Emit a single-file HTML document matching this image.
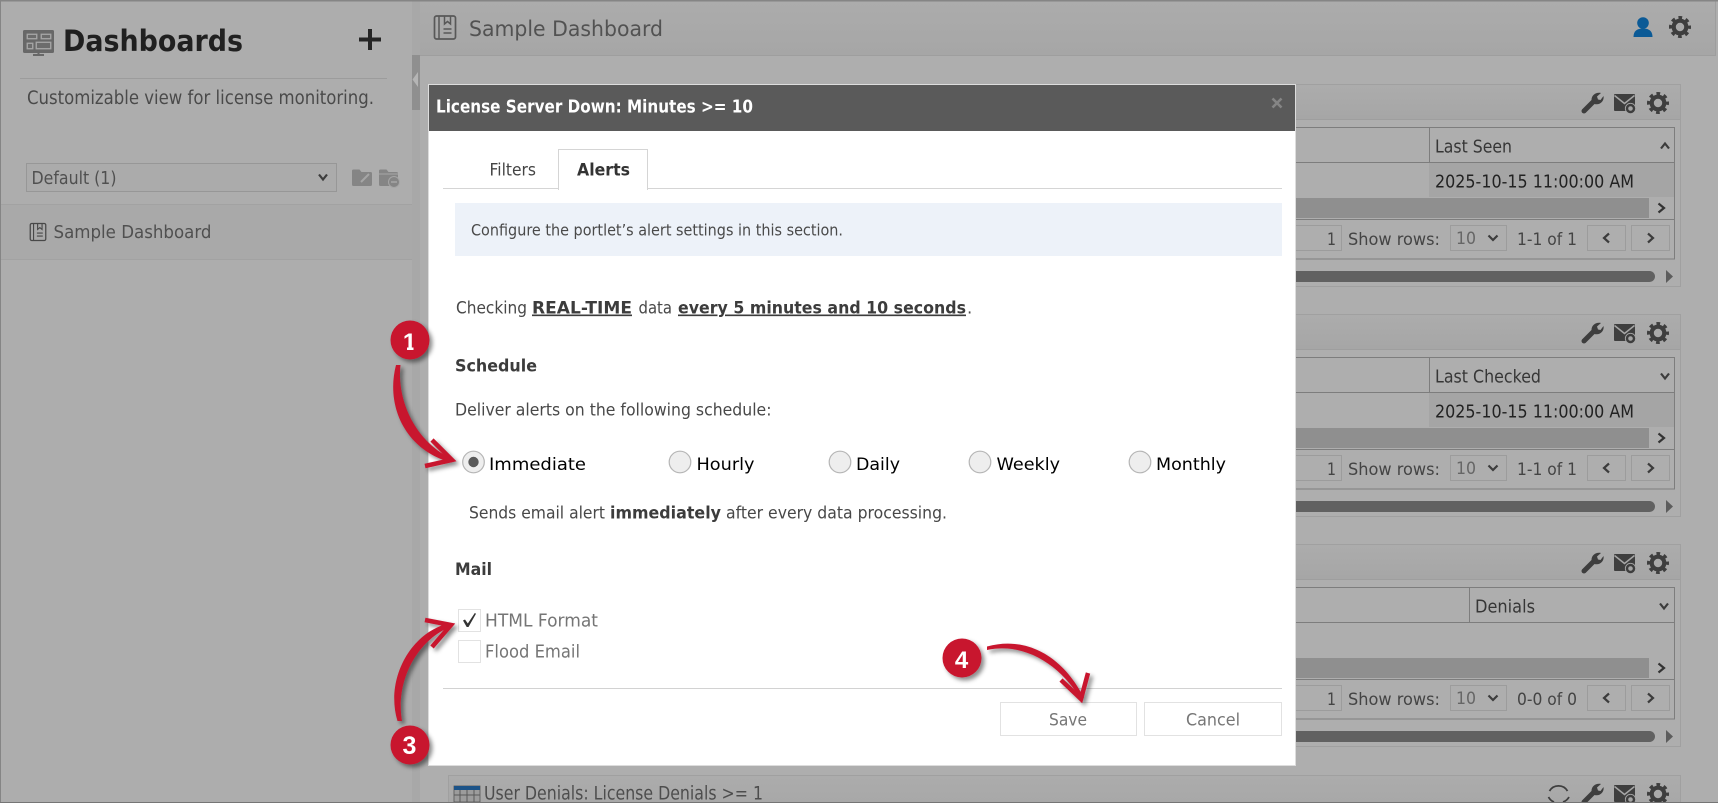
<!DOCTYPE html>
<html><head><meta charset="utf-8"><title>Sample Dashboard</title>
<style>
html,body{margin:0;padding:0;background:#aeaeae;overflow:hidden}
svg{display:block}
text{font-family:"DejaVu Sans","Liberation Sans",sans-serif;white-space:pre}
.p{font-size:17.5px;fill:#3a3a3a}
.g{font-size:17px;fill:#444}
.m{font-size:16.5px;fill:#484848}
.b{font-weight:bold}
.r{font-size:17px;fill:#000}
.n{font-family:"Liberation Sans",sans-serif;font-weight:bold;font-size:24px;fill:#fff}
</style></head><body>
<svg xmlns="http://www.w3.org/2000/svg" width="1718" height="803" viewBox="0 0 1718 803">
<defs>
<filter id="sh" x="-30%" y="-30%" width="170%" height="170%"><feDropShadow dx="3" dy="3" stdDeviation="2.2" flood-color="#000" flood-opacity=".45"/></filter>
<linearGradient id="hd" x1="0" y1="0" x2="0" y2="1"><stop offset="0" stop-color="#acacac"/><stop offset="1" stop-color="#a6a6a6"/></linearGradient>
<symbol id="gear" viewBox="0 0 22 22" overflow="visible"><circle cx="11" cy="11" r="6.3" fill="none" stroke="#3e3e3e" stroke-width="4.2"/><circle cx="11" cy="11" r="9.3" fill="none" stroke="#3e3e3e" stroke-width="3.4" stroke-dasharray="3.65 3.65" stroke-dashoffset="1.8"/></symbol>
<symbol id="wrench" viewBox="0 0 22 22" overflow="visible"><path d="M3,19 L12,10" stroke="#3e3e3e" stroke-width="5" stroke-linecap="round" fill="none"/><path d="M10.500,8 C10.500,3 15,0 20,1 L16,4.500 L17,7.500 L19.500,8 L22.500,4 C23.500,9 19,13.500 13.500,12 Z" fill="#3e3e3e"/></symbol>
<symbol id="mail" viewBox="0 0 23 20" overflow="visible"><rect x="0" y="0" width="21" height="17" rx="1" fill="#3e3e3e"/><path d="M0.500,1.500 L10.500,9.500 L20.500,1.500" fill="none" stroke="#a6a6a6" stroke-width="1.500"/><circle cx="16.500" cy="14.500" r="5.600" fill="#a6a6a6"/><circle cx="16.500" cy="14.500" r="3.500" fill="none" stroke="#3e3e3e" stroke-width="2.400"/></symbol>
<symbol id="book" viewBox="0 0 23 25" overflow="visible"><rect x="1" y="1" width="21" height="23" rx="2" fill="none" stroke="currentColor" stroke-width="1.700"/><path d="M5.500,1 V24" stroke="currentColor" stroke-width="1.500"/><path d="M11,1 V9 L14,6.500 L17,9 V1" fill="none" stroke="currentColor" stroke-width="1.500"/><path d="M10,14 H18 M10,18 H18" stroke="currentColor" stroke-width="1.500"/></symbol>
</defs>

<!-- base -->
<rect width="1718" height="803" fill="#aeaeae"/>
<rect width="412" height="803" fill="#adadad"/>
<rect x="412" width="8" height="803" fill="#a8a8a8"/>
<rect x="412" y="55" width="8" height="55" fill="#8f8f8f"/>
<path d="M418,72 L412.500,79.500 L418,87 Z" fill="#b5b5b5"/>
<rect x="420" width="1295" height="55" fill="url(#hd)"/>
<rect x="420" y="55" width="1295" height="1" fill="#9e9e9e"/>
<rect x="1715" width="1" height="56" fill="#9e9e9e"/>
<rect width="1718" height="1.500" fill="#858585"/>
<rect width="1" height="803" fill="#858585"/>
<rect y="802" width="1718" height="1" fill="#757575"/>

<!-- sidebar -->
<g>
<rect x="23" y="30" width="31" height="23" rx="1.500" fill="#686868"/>
<path d="M33,55 H44 M38.500,53 V56" stroke="#686868" stroke-width="2"/>
<path d="M27,34 H37 V39 H27 Z M41,34 H51 V39 H41 Z M27,43 H33 V49 H27 Z M36,42 H51 V49 H36 Z" fill="#9e9e9e" stroke="#a9a9a9" stroke-width=".8"/>
<path d="M28,35 H36 V38 H28 Z M42,35 H50 V38 H42 Z M28,44 H32 V48 H28 Z M37,43 H50 V48 H37 Z" fill="#6c6c6c"/>
</g>
<text x="63" y="51" font-size="29" font-weight="bold" fill="#202020" textLength="180" lengthAdjust="spacingAndGlyphs">Dashboards</text>
<path d="M359,39.500 H381 M370,29 V50" stroke="#252525" stroke-width="4"/>
<rect x="20" y="78" width="367" height="1" fill="#9c9c9c"/>
<text x="27" y="104" style="fill:#4a4a4a;font-size:18.500px" textLength="347" lengthAdjust="spacingAndGlyphs">Customizable view for license monitoring.</text>
<rect x="26.500" y="163.500" width="310" height="28" fill="#ababab" stroke="#979797"/>
<text x="31.500" y="184" style="font-size:17.500px;fill:#505050" textLength="85" lengthAdjust="spacingAndGlyphs">Default (1)</text>
<path d="M319,174.500 L323,179.500 L327,174.500" fill="none" stroke="#3c3c3c" stroke-width="2.200"/>
<path d="M352,171 a1.500,1.500 0 0 1 1.500,-1.500 h6 l2,2.500 h9 a1.500,1.500 0 0 1 1.500,1.500 v11 a1.500,1.500 0 0 1 -1.500,1.500 h-17 a1.500,1.500 0 0 1 -1.500,-1.500 Z" fill="#858585"/>
<path d="M361,182 L369,174" stroke="#a6a6a6" stroke-width="2"/>
<path d="M379,171 a1.500,1.500 0 0 1 1.500,-1.500 h6 l2,2.500 h8 a1.500,1.500 0 0 1 1.500,1.500 v11 a1.500,1.500 0 0 1 -1.500,1.500 h-16 a1.500,1.500 0 0 1 -1.500,-1.500 Z" fill="#858585"/>
<path d="M379,174 H398" stroke="#a6a6a6" stroke-width="1"/>
<circle cx="394" cy="182" r="5.500" fill="#858585" stroke="#a6a6a6"/><path d="M391,182 H397" stroke="#a6a6a6" stroke-width="1.500"/>
<rect x="1" y="204" width="411" height="55" fill="#a9a9a9"/>
<rect x="1" y="204" width="411" height="1" fill="#a2a2a2"/>
<rect x="1" y="259" width="411" height="1" fill="#a2a2a2"/>
<use href="#book" x="29.500" y="222" width="17" height="20" color="#484848"/>
<text x="53.500" y="238" style="font-size:18px;fill:#505050" textLength="158" lengthAdjust="spacingAndGlyphs">Sample Dashboard</text>

<!-- content header -->
<use href="#book" x="433.500" y="14" width="23" height="27" color="#585858"/>
<text x="469" y="36" style="font-size:21px;fill:#525252" textLength="194" lengthAdjust="spacingAndGlyphs">Sample Dashboard</text>
<circle cx="1643" cy="23" r="5.800" fill="#0b5a96"/>
<path d="M1633.500,37 C1633.500,31 1637,28.500 1643,28.500 C1649,28.500 1652.500,31 1652.500,37 Z" fill="#0b5a96"/>
<use href="#gear" x="1669" y="16" width="22" height="22"/>

<!-- portlet 1 -->
<rect x="448.500" y="84.500" width="1232" height="202" fill="#aeaeae" stroke="#a0a0a0"/>
<rect x="449" y="85" width="1231" height="34" fill="url(#hd)"/><rect x="449" y="119" width="1231" height="1" fill="#9e9e9e"/>
<use href="#wrench" x="1581" y="92" width="22" height="22"/><use href="#mail" x="1614" y="94" width="23" height="20"/><use href="#gear" x="1647" y="92" width="22" height="22"/>
<rect x="460" y="127.500" width="1214.500" height="131.500" fill="none" stroke="#7d7d7d"/>
<path d="M460,162.500 H1675 M1429.500,127 V162" stroke="#7d7d7d" fill="none"/>
<rect x="1429" y="163" width="245" height="34" fill="#a5a5a5"/>
<text x="1435" y="152.500" class="p" style="fill:#363636" textLength="77" lengthAdjust="spacingAndGlyphs">Last Seen</text>
<path d="M1661,148.500 L1665,143.500 L1669,148.500" fill="none" stroke="#3c3c3c" stroke-width="2.200"/>
<text x="1435" y="187.500" class="p" style="fill:#222" textLength="199" lengthAdjust="spacingAndGlyphs">2025-10-15 11:00:00 AM</text>
<rect x="461" y="198" width="1188" height="20" fill="#8f8f8f"/>
<path d="M1658.500,203.500 L1664,208 L1658.500,212.500" fill="none" stroke="#333" stroke-width="2.200"/>
<path d="M460,219.500 H1675" stroke="#7d7d7d"/>
<rect x="1290.500" y="225.500" width="51" height="25" fill="none" stroke="#9c9c9c"/>
<text x="1327" y="245" class="g" textLength="9" lengthAdjust="spacingAndGlyphs">1</text>
<text x="1348" y="245" class="g" textLength="92" lengthAdjust="spacingAndGlyphs">Show rows:</text>
<rect x="1450.500" y="225.500" width="56" height="25" fill="none" stroke="#9c9c9c"/>
<text x="1456" y="244" class="g" style="fill:#666" textLength="20" lengthAdjust="spacingAndGlyphs">10</text>
<path d="M1488.500,235.500 L1493,240 L1497.500,235.500" fill="none" stroke="#3c3c3c" stroke-width="2.200"/>
<text x="1517" y="245" class="g" textLength="60" lengthAdjust="spacingAndGlyphs">1-1 of 1</text>
<rect x="1587.500" y="225.500" width="38" height="25" fill="none" stroke="#9c9c9c"/><rect x="1631.500" y="225.500" width="38" height="25" fill="none" stroke="#9c9c9c"/>
<path d="M1609,233.500 L1604,238 L1609,242.500 M1648,233.500 L1653,238 L1648,242.500" fill="none" stroke="#3c3c3c" stroke-width="2.200"/>
<rect x="460" y="271" width="1195" height="11" rx="5.500" fill="#616161"/>
<path d="M1666,270 L1673,276.500 L1666,283 Z" fill="#5c5c5c"/>

<!-- portlet 2 -->
<rect x="448.500" y="314.500" width="1232" height="202" fill="#aeaeae" stroke="#a0a0a0"/>
<rect x="449" y="315" width="1231" height="34" fill="url(#hd)"/><rect x="449" y="349" width="1231" height="1" fill="#9e9e9e"/>
<use href="#wrench" x="1581" y="322" width="22" height="22"/><use href="#mail" x="1614" y="324" width="23" height="20"/><use href="#gear" x="1647" y="322" width="22" height="22"/>
<rect x="460" y="357.500" width="1214.500" height="131.500" fill="none" stroke="#7d7d7d"/>
<path d="M460,392.500 H1675 M1429.500,357 V392" stroke="#7d7d7d" fill="none"/>
<rect x="1429" y="393" width="245" height="34" fill="#a5a5a5"/>
<text x="1435" y="382.500" class="p" style="fill:#363636" textLength="106" lengthAdjust="spacingAndGlyphs">Last Checked</text>
<path d="M1661,373.500 L1665,378.500 L1669,373.500" fill="none" stroke="#3c3c3c" stroke-width="2.200"/>
<text x="1435" y="417.500" class="p" style="fill:#222" textLength="199" lengthAdjust="spacingAndGlyphs">2025-10-15 11:00:00 AM</text>
<rect x="461" y="428" width="1188" height="20" fill="#8f8f8f"/>
<path d="M1658.500,433.500 L1664,438 L1658.500,442.500" fill="none" stroke="#333" stroke-width="2.200"/>
<path d="M460,449.500 H1675" stroke="#7d7d7d"/>
<rect x="1290.500" y="455.500" width="51" height="25" fill="none" stroke="#9c9c9c"/>
<text x="1327" y="475" class="g" textLength="9" lengthAdjust="spacingAndGlyphs">1</text>
<text x="1348" y="475" class="g" textLength="92" lengthAdjust="spacingAndGlyphs">Show rows:</text>
<rect x="1450.500" y="455.500" width="56" height="25" fill="none" stroke="#9c9c9c"/>
<text x="1456" y="474" class="g" style="fill:#666" textLength="20" lengthAdjust="spacingAndGlyphs">10</text>
<path d="M1488.500,465.500 L1493,470 L1497.500,465.500" fill="none" stroke="#3c3c3c" stroke-width="2.200"/>
<text x="1517" y="475" class="g" textLength="60" lengthAdjust="spacingAndGlyphs">1-1 of 1</text>
<rect x="1587.500" y="455.500" width="38" height="25" fill="none" stroke="#9c9c9c"/><rect x="1631.500" y="455.500" width="38" height="25" fill="none" stroke="#9c9c9c"/>
<path d="M1609,463.500 L1604,468 L1609,472.500 M1648,463.500 L1653,468 L1648,472.500" fill="none" stroke="#3c3c3c" stroke-width="2.200"/>
<rect x="460" y="501" width="1195" height="11" rx="5.500" fill="#616161"/>
<path d="M1666,500 L1673,506.500 L1666,513 Z" fill="#5c5c5c"/>

<!-- portlet 3 -->
<rect x="448.500" y="544.500" width="1232" height="202" fill="#aeaeae" stroke="#a0a0a0"/>
<rect x="449" y="545" width="1231" height="34" fill="url(#hd)"/><rect x="449" y="579" width="1231" height="1" fill="#9e9e9e"/>
<use href="#wrench" x="1581" y="552" width="22" height="22"/><use href="#mail" x="1614" y="554" width="23" height="20"/><use href="#gear" x="1647" y="552" width="22" height="22"/>
<rect x="460" y="587.500" width="1214.500" height="131.500" fill="none" stroke="#7d7d7d"/>
<path d="M460,622.500 H1675 M1469.500,587 V622" stroke="#7d7d7d" fill="none"/>
<text x="1475" y="612.500" class="p" style="fill:#363636" textLength="60" lengthAdjust="spacingAndGlyphs">Denials</text>
<path d="M1660,603.500 L1664,608.500 L1668,603.500" fill="none" stroke="#3c3c3c" stroke-width="2.200"/>
<rect x="461" y="658" width="1188" height="20" fill="#8f8f8f"/>
<path d="M1658.500,663.500 L1664,668 L1658.500,672.500" fill="none" stroke="#333" stroke-width="2.200"/>
<path d="M460,679.500 H1675" stroke="#7d7d7d"/>
<rect x="1290.500" y="685.500" width="51" height="25" fill="none" stroke="#9c9c9c"/>
<text x="1327" y="705" class="g" textLength="9" lengthAdjust="spacingAndGlyphs">1</text>
<text x="1348" y="705" class="g" textLength="92" lengthAdjust="spacingAndGlyphs">Show rows:</text>
<rect x="1450.500" y="685.500" width="56" height="25" fill="none" stroke="#9c9c9c"/>
<text x="1456" y="704" class="g" style="fill:#666" textLength="20" lengthAdjust="spacingAndGlyphs">10</text>
<path d="M1488.500,695.500 L1493,700 L1497.500,695.500" fill="none" stroke="#3c3c3c" stroke-width="2.200"/>
<text x="1517" y="705" class="g" textLength="60" lengthAdjust="spacingAndGlyphs">0-0 of 0</text>
<rect x="1587.500" y="685.500" width="38" height="25" fill="none" stroke="#9c9c9c"/><rect x="1631.500" y="685.500" width="38" height="25" fill="none" stroke="#9c9c9c"/>
<path d="M1609,693.500 L1604,698 L1609,702.500 M1648,693.500 L1653,698 L1648,702.500" fill="none" stroke="#3c3c3c" stroke-width="2.200"/>
<rect x="460" y="731" width="1195" height="11" rx="5.500" fill="#616161"/>
<path d="M1666,730 L1673,736.500 L1666,743 Z" fill="#5c5c5c"/>

<!-- portlet 4 -->
<rect x="448.500" y="775.500" width="1232" height="40" fill="url(#hd)" stroke="#a0a0a0"/>
<rect x="454" y="786" width="26" height="16" fill="#9c9c9c" stroke="#555" stroke-width=".8"/>
<rect x="454" y="786" width="26" height="4" fill="#1c5388"/>
<path d="M460,790 V802 M467,790 V802 M474,790 V802 M454,795 H480" stroke="#5a5a5a" stroke-width="1"/>
<text x="484" y="799.500" style="font-size:18.500px;fill:#4d4d4d" textLength="279" lengthAdjust="spacingAndGlyphs">User Denials: License Denials &gt;= 1</text>
<path d="M1549.500,791 A10.500,10.500 0 0 1 1567.500,791 M1569,797 A10.500,10.500 0 0 1 1563,802 M1554,802 A10.500,10.500 0 0 1 1548.500,797" fill="none" stroke="#3e3e3e" stroke-width="1.800"/>
<use href="#wrench" x="1581" y="783" width="22" height="22"/><use href="#mail" x="1614" y="785" width="23" height="20"/><use href="#gear" x="1647" y="783" width="22" height="22"/>
<rect y="802" width="1718" height="1" fill="#757575"/>

<!-- modal -->
<rect x="428" y="84" width="868" height="682" fill="#ddd"/>
<rect x="429" y="85" width="866" height="680" fill="#fff"/>
<rect x="429" y="85" width="866" height="46" fill="#5a5a5a"/>
<text x="436" y="112.500" style="font-size:17.500px;font-weight:bold;fill:#fff" textLength="317" lengthAdjust="spacingAndGlyphs">License Server Down: Minutes &gt;= 10</text>
<path d="M1272.500,98.500 L1281.500,107.500 M1281.500,98.500 L1272.500,107.500" stroke="#858585" stroke-width="2.600"/>

<path d="M443,188.500 H558 M647,188.500 H1282" stroke="#d5d5d5"/>
<path d="M558.500,190 V149.500 H647.500 V190" fill="#fff" stroke="#d5d5d5"/>
<text x="489.500" y="175.500" class="m" style="fill:#444" textLength="46.500" lengthAdjust="spacingAndGlyphs">Filters</text>
<text x="577" y="175.500" class="m b" style="fill:#333" textLength="53" lengthAdjust="spacingAndGlyphs">Alerts</text>

<rect x="455" y="203" width="827" height="53" fill="#edf2f9"/>
<text x="471" y="235.500" style="font-size:16px;fill:#4a4a4a" textLength="372" lengthAdjust="spacingAndGlyphs">Configure the portlet’s alert settings in this section.</text>

<text x="456" y="313.500" class="m" textLength="71" lengthAdjust="spacingAndGlyphs">Checking</text>
<text x="532" y="313.500" class="m b" style="fill:#3c3c3c;text-decoration:underline" textLength="100" lengthAdjust="spacingAndGlyphs">REAL-TIME</text>
<text x="638.500" y="313.500" class="m" textLength="33.500" lengthAdjust="spacingAndGlyphs">data</text>
<text x="678" y="313.500" class="m b" style="fill:#3c3c3c;text-decoration:underline" textLength="288" lengthAdjust="spacingAndGlyphs">every 5 minutes and 10 seconds</text>
<text x="967" y="313.500" class="m">.</text>

<text x="455" y="371.500" class="m b" style="fill:#3c3c3c" textLength="82" lengthAdjust="spacingAndGlyphs">Schedule</text>
<text x="455" y="415.500" class="m" textLength="316.500" lengthAdjust="spacingAndGlyphs">Deliver alerts on the following schedule:</text>

<circle cx="473.500" cy="462" r="10.800" fill="#eee" stroke="#b5b5b5" stroke-width="1.200"/><circle cx="473.500" cy="462" r="5.200" fill="#5a5a5a"/>
<text x="489" y="470" class="r" textLength="97" lengthAdjust="spacingAndGlyphs">Immediate</text>
<circle cx="680" cy="462" r="10.800" fill="#eee" stroke="#b5b5b5" stroke-width="1.200"/>
<text x="696.500" y="470" class="r" textLength="58" lengthAdjust="spacingAndGlyphs">Hourly</text>
<circle cx="840" cy="462" r="10.800" fill="#eee" stroke="#b5b5b5" stroke-width="1.200"/>
<text x="856" y="470" class="r" textLength="44" lengthAdjust="spacingAndGlyphs">Daily</text>
<circle cx="980" cy="462" r="10.800" fill="#eee" stroke="#b5b5b5" stroke-width="1.200"/>
<text x="996.500" y="470" class="r" textLength="63.500" lengthAdjust="spacingAndGlyphs">Weekly</text>
<circle cx="1140" cy="462" r="10.800" fill="#eee" stroke="#b5b5b5" stroke-width="1.200"/>
<text x="1156" y="470" class="r" textLength="70" lengthAdjust="spacingAndGlyphs">Monthly</text>

<text x="469" y="518.500" class="m" textLength="136" lengthAdjust="spacingAndGlyphs">Sends email alert</text>
<text x="610" y="518.500" class="m b" style="fill:#3c3c3c" textLength="111" lengthAdjust="spacingAndGlyphs">immediately</text>
<text x="726" y="518.500" class="m" textLength="221" lengthAdjust="spacingAndGlyphs">after every data processing.</text>

<text x="455" y="575" class="m b" style="fill:#3c3c3c" textLength="37" lengthAdjust="spacingAndGlyphs">Mail</text>
<rect x="458.500" y="609.500" width="22" height="22" fill="#fff" stroke="#e2e2e2"/>
<path d="M463,620.500 L465,619.500 L467.800,623.500 L474.800,613 L476,613.800 L468.500,627 L466.700,627 Z" fill="#333"/>
<text x="485" y="626.500" style="font-size:17.500px;fill:#757575" textLength="113" lengthAdjust="spacingAndGlyphs">HTML Format</text>
<rect x="458.500" y="640.500" width="22" height="22" fill="#fff" stroke="#e2e2e2"/>
<text x="485" y="657.500" style="font-size:17.500px;fill:#757575" textLength="95" lengthAdjust="spacingAndGlyphs">Flood Email</text>

<path d="M443,688.500 H1282" stroke="#d2d2d2"/>
<rect x="1000.500" y="702.500" width="136" height="33" fill="#fff" stroke="#e2e2e2"/>
<rect x="1144.500" y="702.500" width="137" height="33" fill="#fff" stroke="#e2e2e2"/>
<text x="1049" y="725.500" style="font-size:17px;fill:#767676" textLength="38" lengthAdjust="spacingAndGlyphs">Save</text>
<text x="1186" y="725.500" style="font-size:17px;fill:#767676" textLength="54" lengthAdjust="spacingAndGlyphs">Cancel</text>

<!-- annotations -->
<g filter="url(#sh)" fill="#c8152f">
<circle cx="410" cy="340" r="19.500"/>
<path d="M396,365 L400.500,365 C397,394 410,437 450,458 L450,462 C407,450 385,408 396,365 Z"/>
<path d="M432,440 L452,460 L425,466" fill="none" stroke="#c8152f" stroke-width="4.500"/>
</g>
<text x="409.500" y="350" class="n" text-anchor="middle">1</text>
<path d="M401,346.500 h6 v4.500 h-6 Z M413.500,346.500 h6 v4.500 h-6 Z" fill="#c8152f"/>

<g filter="url(#sh)" fill="#c8152f">
<circle cx="410" cy="745" r="19.500"/>
<path d="M397.500,721 L402,721 C395,680 418,640 450,627 L450,623 C410,632 385,680 397.500,721 Z"/>
<path d="M425,620 L451,625 L432,647" fill="none" stroke="#c8152f" stroke-width="4.500"/>
</g>
<text x="409.500" y="754" class="n" text-anchor="middle" style="font-size:25px">3</text>

<g filter="url(#sh)" fill="#c8152f">
<circle cx="962" cy="658" r="19.500"/>
<path d="M987,646.500 L987,650 C1025,642 1060,665 1080,698 L1084,698 C1065,660 1030,635 987,646.500 Z"/>
<path d="M1061,680 L1081,699 L1088,673" fill="none" stroke="#c8152f" stroke-width="4.500"/>
</g>
<text x="961.500" y="668" class="n" text-anchor="middle">4</text>
</svg>
</body></html>
